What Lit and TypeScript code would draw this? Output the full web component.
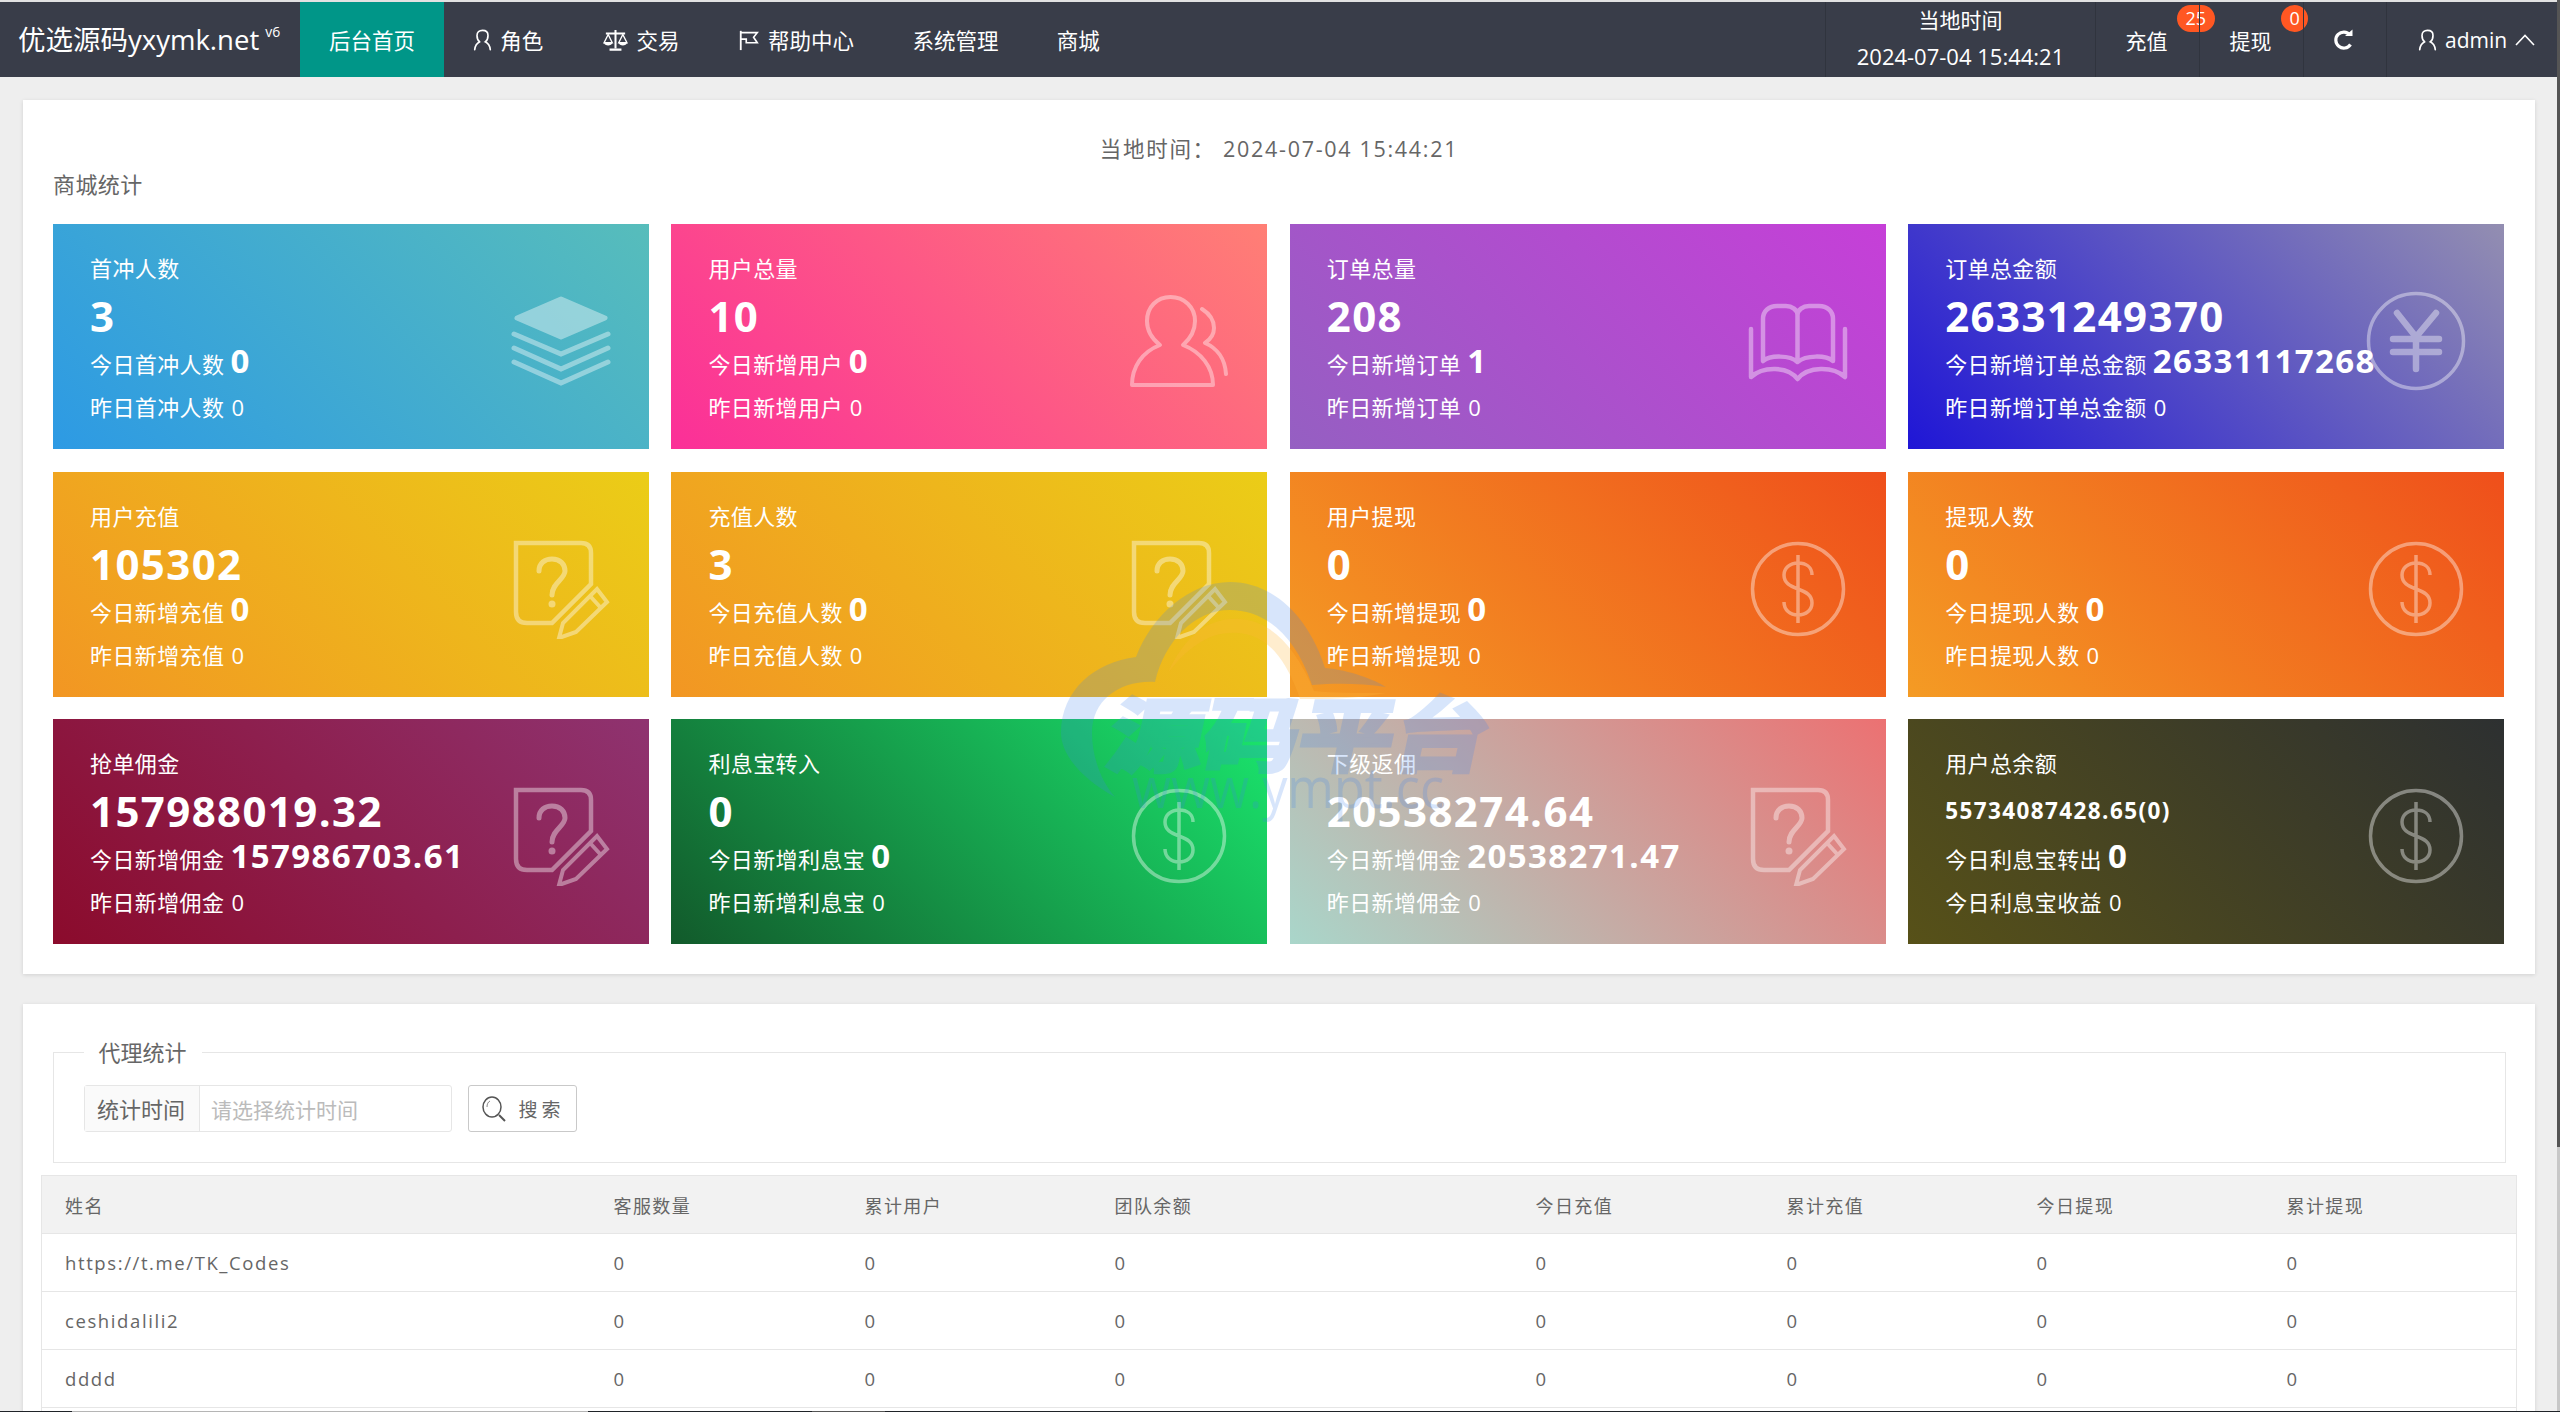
import { LitElement, html, css, svg } from 'lit';
import { customElement } from 'lit/decorators.js';

const ICONS: Record<string, unknown> = {
  stack: svg`
    <path d="M50 8 L94 27 L50 46 L6 27 Z" fill="#fff" stroke="#fff" stroke-width="5" stroke-linejoin="round"/>
    <path d="M3 43 L50 63 L97 43 M3 57 L50 78 L97 57 M3 71 L50 92 L97 71" fill="none" stroke="#fff" stroke-width="5" stroke-linecap="round"/>`,
  user: svg`
    <path d="M31 54 C22 47 18 38 18 30 C18 16 28 6 41.5 6 C55 6 66 16 66 30 C66 38 62 47 54 54 C72 61 84 76 84 94 H3 C3 76 13 61 31 54 Z" fill="none" stroke="#fff" stroke-width="4" stroke-linejoin="round"/>
    <path d="M73 18 C81 23 85 30 85 37 C85 43 82 48 76 52 C88 57 96 68 97 83" fill="none" stroke="#fff" stroke-width="4" stroke-linecap="round" stroke-linejoin="round"/>`,
  book: svg`
    <path d="M15 70 V28 C15 20 21 15 29 15 H38 C44 15 49.5 19 49.5 24 C49.5 19 55 15 61 15 H71 C79 15 85 20 85 28 V70 C78 64 58 64 49.5 71 C42 64 22 64 15 70 Z M49.5 24 V71" fill="none" stroke="#fff" stroke-width="4.5" stroke-linejoin="round"/>
    <path d="M3 38 V86 C15 75 40 75 49.5 88 C60 75 85 75 97 86 V38" fill="none" stroke="#fff" stroke-width="4.5" stroke-linecap="round" stroke-linejoin="round"/>`,
  yen: svg`
    <circle cx="50" cy="50" r="47.5" fill="none" stroke="#fff" stroke-width="3.5"/>
    <path d="M31 22 L50 46 L70 22 M50 46 V78 M27 48 H73 M27 61 H73" fill="none" stroke="#fff" stroke-width="6.5" stroke-linecap="round" stroke-linejoin="round"/>`,
  dollar: svg`
    <circle cx="50" cy="50" r="45.5" fill="none" stroke="#fff" stroke-width="3.5"/>
    <path d="M64 36 C64 28 58 24 50 24 C42 24 36 29 36 36 C36 44 42 47 50 50 C58 53 64 56 64 64 C64 71 58 76 50 76 C42 76 36 71 36 63 M50 16 V84" fill="none" stroke="#fff" stroke-width="3.5"/>`,
  ask: svg`
    <path d="M5 4 H70 Q80 4 80 14 V45 L41 84 H16 Q5 84 5 73 Z" fill="none" stroke="#fff" stroke-width="4.5"/>
    <path d="M28 32 C28 24 34 20 41 20 C49 20 54 25 54 32 C54 40 41 44 41 56" fill="none" stroke="#fff" stroke-width="5" stroke-linecap="round"/>
    <circle cx="41" cy="65" r="3.5" fill="#fff"/>
    <path d="M86 50 L96 63 L65 93 L48 99 L52 84 Z M79 57 L90 69" fill="none" stroke="#fff" stroke-width="4"/>`,
};

const CARDS = [
  { title: '首冲人数', value: '3', today: '今日首冲人数', todayVal: '0', last: '昨日首冲人数', icon: 'stack', from: '#2d9ae4', to: '#57bdbb' },
  { title: '用户总量', value: '10', today: '今日新增用户', todayVal: '0', last: '昨日新增用户', icon: 'user', from: '#fb2f98', to: '#ff7f75' },
  { title: '订单总量', value: '208', today: '今日新增订单', todayVal: '1', last: '昨日新增订单', icon: 'book', from: '#955fc2', to: '#c63fd8' },
  { title: '订单总金额', value: '26331249370', today: '今日新增订单总金额', todayVal: '26331117268', last: '昨日新增订单总金额', icon: 'yen', from: '#1f16d6', to: '#938eb1' },
  { title: '用户充值', value: '105302', today: '今日新增充值', todayVal: '0', last: '昨日新增充值', icon: 'ask', from: '#f29623', to: '#ebcd17' },
  { title: '充值人数', value: '3', today: '今日充值人数', todayVal: '0', last: '昨日充值人数', icon: 'ask', from: '#f29623', to: '#ebcd17' },
  { title: '用户提现', value: '0', today: '今日新增提现', todayVal: '0', last: '昨日新增提现', icon: 'dollar', from: '#f49b24', to: '#ef4f1b' },
  { title: '提现人数', value: '0', today: '今日提现人数', todayVal: '0', last: '昨日提现人数', icon: 'dollar', from: '#f49b24', to: '#ef4f1b' },
  { title: '抢单佣金', value: '157988019.32', today: '今日新增佣金', todayVal: '157986703.61', last: '昨日新增佣金', icon: 'ask', from: '#8b0b2c', to: '#8f3370' },
  { title: '利息宝转入', value: '0', today: '今日新增利息宝', todayVal: '0', last: '昨日新增利息宝', icon: 'dollar', from: '#125a2b', to: '#1ae56d' },
  { title: '下级返佣', value: '20538274.64', today: '今日新增佣金', todayVal: '20538271.47', last: '昨日新增佣金', icon: 'ask', from: '#a9d6ca', to: '#ec7172' },
  { title: '用户总余额', value: '55734087428.65(0)', small: true, today: '今日利息宝转出', todayVal: '0', last: '今日利息宝收益', icon: 'dollar', from: '#575118', to: '#2d3031' },
];

const COLS = [
  { label: '姓名', width: 548 },
  { label: '客服数量', width: 251 },
  { label: '累计用户', width: 250 },
  { label: '团队余额', width: 421 },
  { label: '今日充值', width: 251 },
  { label: '累计充值', width: 250 },
  { label: '今日提现', width: 250 },
  { label: '累计提现', width: 254 },
];

const NAMES = ['https://t.me/TK_Codes', 'ceshidalili2', 'dddd'];

const userIcon = html`<svg class="nav-icon" viewBox="0 0 20 24"><path d="M7 14 C4 12 4 9 4 7 C4 3.5 6.5 1.5 10 1.5 C13.5 1.5 16 3.5 16 7 C16 9 16 12 13 14 C16 15.500 18 18 18.500 22.500 M7 14 C4 15.500 2 18 1.500 22.500" fill="none" stroke="#fff" stroke-width="1.800" stroke-linecap="round"/></svg>`;

@customElement('app-root')
export class AppRoot extends LitElement {
  static styles = css`
    :host {
      display: block;
      position: relative;
      height: 1412px;
      overflow: hidden;
      background: #eee;
      font-family: 'Open Sans', 'Noto Sans CJK SC', sans-serif;
      color: #666;
    }

    .topline {
      height: 2px;
      background: #e2e2e2;
    }

    .header {
      display: flex;
      height: 75px;
      background: #393d49;
      color: #fff;
      font-size: 21.5px;
    }

    .logo {
      width: 300px;
      box-sizing: border-box;
      padding-left: 18px;
      font-size: 27.5px;
      line-height: 75px;
      white-space: nowrap;
    }

    .logo sup {
      font-size: 14px;
      line-height: 1;
      margin-left: 6px;
      vertical-align: 13px;
    }

    .nav {
      display: flex;
    }

    .nav-item {
      display: flex;
      align-items: center;
      padding: 0 29.2px;
      gap: 8px;
      white-space: nowrap;
    }

    .nav-item.active {
      background: #009688;
      padding: 0 29px;
    }

    .nav-icon {
      width: 19px;
      height: 22px;
      flex: none;
    }

    .nav-icon.wide {
      width: 27px;
    }

    .nav-icon.flag {
      width: 22px;
    }

    .right {
      display: flex;
      margin-left: auto;
    }

    .cell {
      position: relative;
      display: flex;
      align-items: center;
      justify-content: center;
      border-left: 1px solid #30343e;
      box-sizing: border-box;
      font-size: 21px;
    }

    .time {
      width: 270px;
      flex-direction: column;
      padding-bottom: 3px;
      line-height: 36px;
    }

    .time-value {
      font-size: 22px;
    }

    .count {
      width: 104px;
      padding-right: 2px;
    }

    .refresh {
      width: 83px;
      padding-right: 2px;
    }

    .admin {
      width: 174px;
      justify-content: flex-start;
      padding-left: 31px;
      gap: 8px;
    }

    .badge {
      position: absolute;
      top: 3px;
      left: 81px;
      height: 27px;
      min-width: 27px;
      box-sizing: border-box;
      padding: 0 8.5px;
      border-radius: 14px;
      background: #ff5722;
      font-size: 18px;
      line-height: 27px;
      text-align: center;
    }

    .panel {
      margin: 23px 25px 0 23px;
      background: #fff;
      box-shadow: 0 1px 4px rgba(0, 0, 0, 0.12);
    }

    .stats {
      padding: 32px 30px 30px;
    }

    .stats + .panel {
      margin-top: 30px;
    }

    .now {
      font-size: 21.5px;
      line-height: 34px;
      text-align: center;
      letter-spacing: 1.7px;
    }

    .section {
      margin: 1px 0 23px;
      font-size: 22px;
      line-height: 34px;
      letter-spacing: 0.400px;
    }

    .cards {
      display: grid;
      grid-template-columns: repeat(4, 596px);
      grid-auto-rows: 225px;
      gap: 22.5px 22.4px;
    }

    .card {
      display: flex;
      align-items: center;
      padding: 0 38px 0 37px;
      color: #fff;
      white-space: nowrap;
    }

    .card-text {
      flex: 1;
      align-self: flex-start;
      min-width: 0;
      padding-top: 27px;
      letter-spacing: 0.400px;
    }

    .card-title {
      font-size: 22px;
      line-height: 35px;
    }

    .card-value {
      font-size: 42px;
      font-weight: 700;
      line-height: 60px;
      letter-spacing: 1.400px;
    }

    .card-value.small {
      font-size: 22.5px;
    }

    .card-today {
      height: 36px;
      font-size: 22px;
      line-height: 36px;
    }

    .card-today b {
      font-size: 33px;
      font-weight: 700;
      line-height: 30px;
      letter-spacing: 1.400px;
      margin-left: 6px;
    }

    .card-last {
      font-size: 22px;
      line-height: 50px;
    }

    .card-last span {
      margin-left: 7px;
      letter-spacing: 1px;
    }

    .card-icon {
      flex: none;
      width: 100px;
      height: 100px;
      margin-top: 9px;
      opacity: 0.4;
    }

    .agents {
      height: 420px;
      padding: 31px 18px 0;
    }

    fieldset {
      margin: 0 11px 12px 12px;
      padding: 16px 30px 30px;
      border: 1px solid #e6e6e6;
      min-width: 0;
    }

    legend {
      padding: 0 15.5px 0 14.5px;
      font-size: 22px;
      line-height: 34px;
    }

    .filter {
      display: flex;
      gap: 16px;
      height: 47px;
    }

    .input-group {
      display: flex;
      width: 368px;
      box-sizing: border-box;
      border: 1px solid #e6e6e6;
      border-radius: 3px;
      font-size: 21px;
      line-height: 49px;
    }

    .input-label {
      width: 115px;
      box-sizing: border-box;
      padding-right: 2px;
      background: #fafafa;
      border-right: 1px solid #e6e6e6;
      font-size: 22px;
      line-height: 47px;
      text-align: center;
    }

    .placeholder {
      padding-left: 11px;
      color: #bbb;
    }

    .search {
      display: flex;
      align-items: center;
      justify-content: center;
      gap: 12px;
      width: 109px;
      box-sizing: border-box;
      border: 1px solid #c9c9c9;
      border-radius: 3px;
      font-size: 19px;
      letter-spacing: 4px;
    }

    .search svg {
      width: 26px;
      height: 26px;
    }

    table {
      border-collapse: collapse;
      table-layout: fixed;
      width: 2475px;
      font-size: 18px;
      letter-spacing: 1.400px;
    }

    th,
    td {
      height: 58px;
      box-sizing: border-box;
      padding: 0 0 0 24px;
      border: 1px solid #e6e6e6;
      border-left: none;
      border-right: none;
      font-weight: 400;
      text-align: left;
    }

    td {
      font-size: 18.5px;
      letter-spacing: 1.600px;
    }

    th {
      background: #f2f2f2;
    }

    th:first-child,
    td:first-child {
      padding-left: 23px;
      border-left: 1px solid #e6e6e6;
    }

    th:last-child,
    td:last-child {
      border-right: 1px solid #e6e6e6;
    }

    .scrollbar {
      position: absolute;
      top: 0;
      right: 0;
      bottom: 0;
      width: 3px;
      background: #c8c8c8;
    }

    .scrollbar i {
      display: block;
      height: 1147px;
      background: #555;
    }

    .bottom-edge {
      position: absolute;
      left: 0;
      right: 0;
      bottom: 0;
      height: 1px;
      display: flex;
      background: #1f2328;
    }

    .bottom-edge i:nth-child(1) {
      width: 72px;
    }

    .bottom-edge i:nth-child(2) {
      width: 516px;
      background: #b5b5b5;
    }

    .bottom-edge i:nth-child(3) {
      width: 224px;
    }

    .bottom-edge i:nth-child(4) {
      width: 73px;
      background: #555;
    }

    .watermark {
      position: absolute;
      left: 1060px;
      top: 575px;
      width: 440px;
      height: 250px;
      overflow: visible;
      pointer-events: none;
      z-index: 5;
    }

    .wm-name {
      font-family: 'Noto Sans CJK SC', sans-serif;
      font-size: 95px;
      font-weight: 700;
      stroke: #3c82f0;
      stroke-width: 5px;
    }

    .wm-url {
      font-family: 'Open Sans', sans-serif;
      font-size: 56px;
    }
  `;

  renderIcon(name: string) {
    return html`<svg class="card-icon" viewBox="0 0 100 100">${ICONS[name]}</svg>`;
  }

  renderCard(card: (typeof CARDS)[number]) {
    return html`
      <div class="card" style="background: linear-gradient(45deg, ${card.from}, ${card.to})">
        <div class="card-text">
          <div class="card-title">${card.title}</div>
          <div class="card-value ${card.small ? 'small' : ''}">${card.value}</div>
          <div class="card-today">${card.today}<b>${card.todayVal}</b></div>
          <div class="card-last">${card.last}<span>0</span></div>
        </div>
        ${this.renderIcon(card.icon)}
      </div>
    `;
  }

  renderHeader() {
    return html`
      <div class="header">
        <div class="logo">优选源码yxymk.net<sup>v6</sup></div>
        <div class="nav">
          <div class="nav-item active">后台首页</div>
          <div class="nav-item">${userIcon}角色</div>
          <div class="nav-item">
            <svg class="nav-icon wide" viewBox="0 0 27 24">
              <path d="M13.500 1 V21 M7 22.500 H20 M3 5 H24" fill="none" stroke="#fff" stroke-width="2.200"/>
              <path d="M5.500 6 L1 15 H10 Z M21.500 6 L17 15 H26 Z" fill="none" stroke="#fff" stroke-width="1.500"/>
              <path d="M1 15 H10 C9.500 19 1.500 19 1 15 Z M17 15 H26 C25.500 19 17.500 19 17 15 Z" fill="#fff"/>
            </svg>
            交易
          </div>
          <div class="nav-item">
            <svg class="nav-icon flag" viewBox="0 0 22 24">
              <path d="M2 2 V23" fill="none" stroke="#fff" stroke-width="2"/>
              <path d="M2 4 H20 L16 9 L20 15 H8 V11 H2" fill="none" stroke="#fff" stroke-width="1.800"/>
            </svg>
            帮助中心
          </div>
          <div class="nav-item">系统管理</div>
          <div class="nav-item">商城</div>
        </div>
        <div class="right">
          <div class="cell time">
            <div>当地时间</div>
            <div class="time-value">2024-07-04 15:44:21</div>
          </div>
          <div class="cell count">充值<span class="badge">25</span></div>
          <div class="cell count">提现<span class="badge">0</span></div>
          <div class="cell refresh">
            <svg width="20" height="22" viewBox="0 0 20 22">
              <path d="M16 6 A8 8 0 1 0 16.500 15.500" fill="none" stroke="#fff" stroke-width="3.200"/>
              <path d="M11 7 H18.500 V0.500 Z" fill="#fff"/>
            </svg>
          </div>
          <div class="cell admin">
            ${userIcon}
            <span>admin</span>
            <svg width="20" height="12" viewBox="0 0 20 12">
              <path d="M1 11 L10 1.500 L19 11" fill="none" stroke="#fff" stroke-width="1.600"/>
            </svg>
          </div>
        </div>
      </div>
    `;
  }

  renderAgents() {
    return html`
      <div class="panel agents">
        <fieldset>
          <legend>代理统计</legend>
          <div class="filter">
            <div class="input-group">
              <div class="input-label">统计时间</div>
              <div class="placeholder">请选择统计时间</div>
            </div>
            <div class="search">
              <svg viewBox="0 0 26 26">
                <ellipse cx="12" cy="11" rx="9" ry="10" fill="none" stroke="#555" stroke-width="1.500"/>
                <path d="M7 11 C7 8 8 6 10 5" fill="none" stroke="#888"/>
                <path d="M19 19 L25 25" fill="none" stroke="#555" stroke-width="2"/>
              </svg>
              <span>搜索</span>
            </div>
          </div>
        </fieldset>
        <table>
          <colgroup>${COLS.map((c) => html`<col style="width: ${c.width}px" />`)}</colgroup>
          <tr>${COLS.map((c) => html`<th>${c.label}</th>`)}</tr>
          ${NAMES.map(
            (name) => html`
              <tr>
                <td>${name}</td>
                ${COLS.slice(1).map(() => html`<td>0</td>`)}
              </tr>
            `
          )}
          <tr>${COLS.map(() => html`<td></td>`)}</tr>
        </table>
      </div>
    `;
  }

  render() {
    return html`
      <div class="topline"></div>
      ${this.renderHeader()}
      <div class="panel stats">
        <div class="now">当地时间： 2024-07-04 15:44:21</div>
        <div class="section">商城统计</div>
        <div class="cards">${CARDS.map((c) => this.renderCard(c))}</div>
      </div>
      ${this.renderAgents()}
      <div class="scrollbar"><i></i></div>
      <div class="bottom-edge"><i></i><i></i><i></i><i></i></div>
      <svg class="watermark" viewBox="0 0 440 250">
        <g opacity="0.2" fill="#3c82f0">
          <path d="M55 222 C15 200 1 175 1 158 C1 115 35 87 76 82 C92 40 130 7 170 7 C215 7 250 45 265 93 C290 95 315 105 326 112 C300 108 275 108 252 110 C235 60 205 35 170 35 C135 35 105 65 95 107 C60 105 32 125 32 158 C32 180 40 205 55 222 Z"/>
          <text class="wm-name" transform="translate(44 190) skewX(-12) scale(1 0.85)">源码平台</text>
          <text class="wm-url" x="72" y="233" textLength="312" lengthAdjust="spacingAndGlyphs">www.ympt.cc</text>
        </g>
        <path d="M108 98 C125 60 150 42 180 44 C210 46 235 70 254 116 C275 118 300 118 326 118 C295 124 270 124 240 124 C225 80 205 60 178 58 C150 56 128 72 108 98 Z" fill="rgba(255, 185, 60, 0.25)"/>
      </svg>
    `;
  }
}
